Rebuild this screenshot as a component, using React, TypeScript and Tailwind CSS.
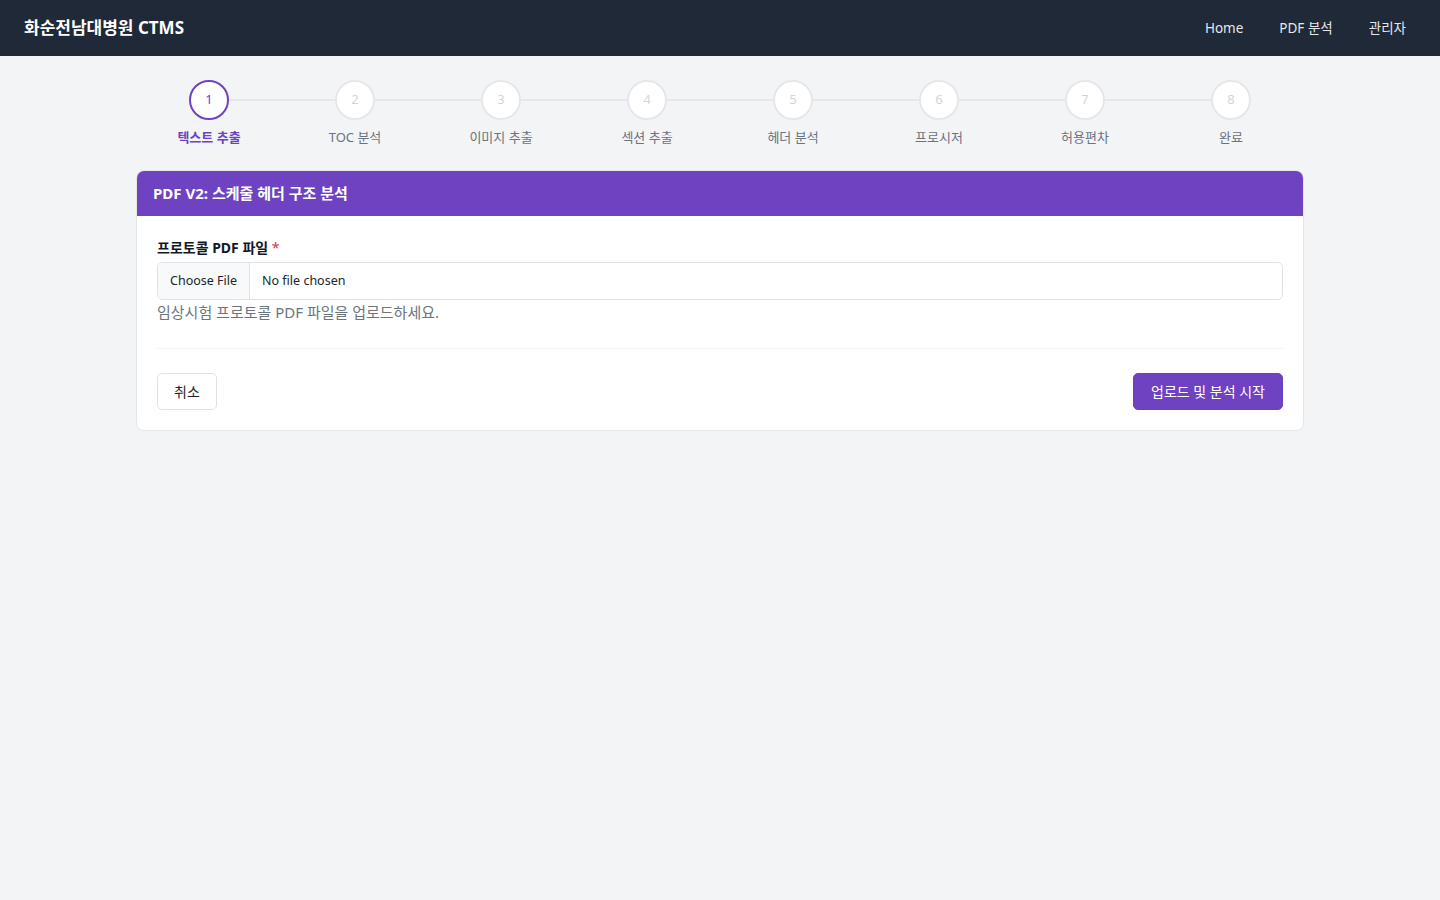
import React from "react";

const steps = ["텍스트 추출", "TOC 분석", "이미지 추출", "섹션 추출", "헤더 분석", "프로시저", "허용편차", "완료"];

export default function App() {
  return (
    <div
      className="min-h-[900px] bg-[#f3f4f6]"
      style={{ fontFamily: '"Noto Sans", "Noto Sans CJK KR", sans-serif' }}
    >
      <nav className="h-14 bg-[#1f2937] flex items-center justify-between pl-6 pr-[34px]">
        <div className="text-white font-bold text-[17px]">화순전남대병원 CTMS</div>
        <div className="flex items-center gap-9 text-[13.5px] text-[#e5e7eb]">
          <span>Home</span>
          <span>PDF 분석</span>
          <span>관리자</span>
        </div>
      </nav>

      <div className="max-w-[1200px] mx-auto px-4 pt-6">
        <div className="flex">
          {steps.map((s, i) => (
            <div key={i} className="flex-1 relative flex flex-col items-center">
              {i < steps.length - 1 && (
                <div className="absolute top-[19px] left-1/2 w-full h-[2px] bg-[#e5e7eb]" />
              )}
              <div
                className={
                  "relative z-10 w-10 h-10 rounded-full bg-white border-2 flex items-center justify-center text-[13px] " +
                  (i === 0 ? "border-[#6f42c1] text-[#6f42c1]" : "border-[#e5e7eb] text-[#d1d5db]")
                }
              >
                {i + 1}
              </div>
              <div
                className={
                  "mt-[7px] text-[13px] leading-[20px] " +
                  (i === 0 ? "text-[#6f42c1] font-semibold" : "text-[#6b7280]")
                }
              >
                {s}
              </div>
            </div>
          ))}
        </div>

        <div className="mt-[23px] bg-white border border-[#e5e7eb] rounded-lg overflow-hidden">
          <div className="h-[45px] bg-[#6f42c1] flex items-center px-4 text-white font-bold text-[15px]">
            PDF V2: 스케줄 헤더 구조 분석
          </div>
          <div className="px-5 pt-[22px] pb-5">
            <div className="text-[14px] font-bold text-[#111827] leading-5 mb-[4px]">
              프로토콜 PDF 파일 <span className="text-[#dc3545] font-normal">*</span>
            </div>
            <div className="h-[38px] border border-[#dee2e6] rounded-[5px] flex items-center text-[12.5px] text-[#212529] overflow-hidden">
              <div className="h-full px-3 flex items-center bg-[#f8f9fa] border-r border-[#dee2e6]">Choose File</div>
              <div className="px-3">No file chosen</div>
            </div>
            <div className="mt-[2px] text-[15px] leading-5 text-[#6c757d]">임상시험 프로토콜 PDF 파일을 업로드하세요.</div>
            <div className="mt-[26px] h-px bg-[#f1f3f5]" />
            <div className="mt-6 flex items-center justify-between">
              <button className="h-[37px] px-4 rounded-[5px] border border-[#dee2e6] bg-white text-[14px] text-[#212529]">
                취소
              </button>
              <button className="h-[37px] px-[17px] rounded-[5px] border border-[#5a48c8] bg-[#6f42c1] text-[14px] text-white">
                업로드 및 분석 시작
              </button>
            </div>
          </div>
        </div>
      </div>
    </div>
  );
}
